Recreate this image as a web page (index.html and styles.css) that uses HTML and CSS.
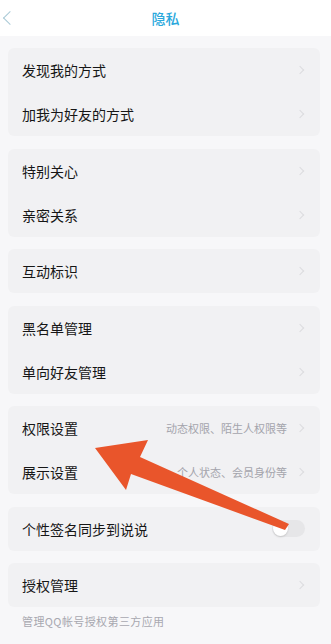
FILE: index.html
```html
<!DOCTYPE html>
<html lang="zh-CN">
<head>
    <meta charset="UTF-8">
    <meta name="viewport" content="width=device-width, initial-scale=1.0">
    <title>隐私</title>
    <link rel="stylesheet" href="styles.css">
</head>
<body>
    <div class="header">
        <span class="back"></span>
        <h1>隐私</h1>
    </div>
    <div class="list">
        <div class="card">
            <div class="row"><span class="label">发现我的方式</span><span class="chev"></span></div>
            <div class="row"><span class="label">加我为好友的方式</span><span class="chev"></span></div>
        </div>
        <div class="card">
            <div class="row"><span class="label">特别关心</span><span class="chev"></span></div>
            <div class="row"><span class="label">亲密关系</span><span class="chev"></span></div>
        </div>
        <div class="card">
            <div class="row"><span class="label">互动标识</span><span class="chev"></span></div>
        </div>
        <div class="card">
            <div class="row"><span class="label">黑名单管理</span><span class="chev"></span></div>
            <div class="row"><span class="label">单向好友管理</span><span class="chev"></span></div>
        </div>
        <div class="card">
            <div class="row"><span class="label">权限设置</span><span class="hint">动态权限、陌生人权限等</span><span class="chev"></span></div>
            <div class="row"><span class="label">展示设置</span><span class="hint">个人状态、会员身份等</span><span class="chev"></span></div>
        </div>
        <div class="card">
            <div class="row"><span class="label">个性签名同步到说说</span><span class="toggle"><span class="knob"></span></span></div>
        </div>
        <div class="card">
            <div class="row"><span class="label">授权管理</span><span class="chev"></span></div>
        </div>
        <p class="note">管理QQ帐号授权第三方应用</p>
    </div>
    <svg class="arrow" width="331" height="644" viewBox="0 0 331 644">
        <polygon points="95,448 148,440 140,457 289,524 285,530 131,474 126,490" fill="#e9552b"/>
    </svg>
</body>
</html>
```

FILE: styles.css
```css
body {
    margin: 0;
    background: #f7f7f9;
    font-family: "Noto Sans CJK SC", "Noto Sans", sans-serif;
    width: 331px;
    height: 644px;
    overflow: hidden;
    position: relative;
}
.header {
    height: 36px;
    background: #fff;
    display: flex;
    align-items: center;
    justify-content: center;
    position: relative;
}
.header h1 {
    margin: 0;
    font-size: 14px;
    font-weight: 500;
    color: #2aa8dc;
}
.back {
    position: absolute;
    left: 5px;
    top: 13px;
    width: 9px;
    height: 9px;
    border-left: 1.5px solid #a9c9d6;
    border-bottom: 1.5px solid #a9c9d6;
    transform: rotate(45deg);
}
.list {
    padding: 12px 11px 0 8px;
    display: flex;
    flex-direction: column;
    gap: 12.5px;
}
.card {
    background: #f1f1f3;
    border-radius: 6px;
}
.row {
    height: 44px;
    display: flex;
    align-items: center;
    padding: 0 14px 0 14px;
}
.label {
    font-size: 14px;
    color: #161616;
    flex: 1;
}
.hint {
    font-size: 11px;
    color: #a4a4ac;
    margin-right: 10px;
}
.chev {
    width: 5px;
    height: 5px;
    border-top: 1px solid #dcdcdf;
    border-right: 1px solid #dcdcdf;
    transform: rotate(45deg);
    margin-right: 3px;
}
.toggle {
    width: 33px;
    height: 17px;
    border-radius: 9px;
    background: #e6e6e8;
    position: relative;
    margin-right: 1px;
}
.knob {
    position: absolute;
    left: 1px;
    top: 1px;
    width: 15px;
    height: 15px;
    border-radius: 50%;
    background: #fff;
    box-shadow: 0 1px 2px rgba(0, 0, 0, 0.15);
}
.note {
    margin: -7px 0 0 14px;
    font-size: 11px;
    letter-spacing: 0.4px;
    color: #a8a8b0;
}
.arrow {
    position: absolute;
    left: 0;
    top: 0;
    pointer-events: none;
}
```
